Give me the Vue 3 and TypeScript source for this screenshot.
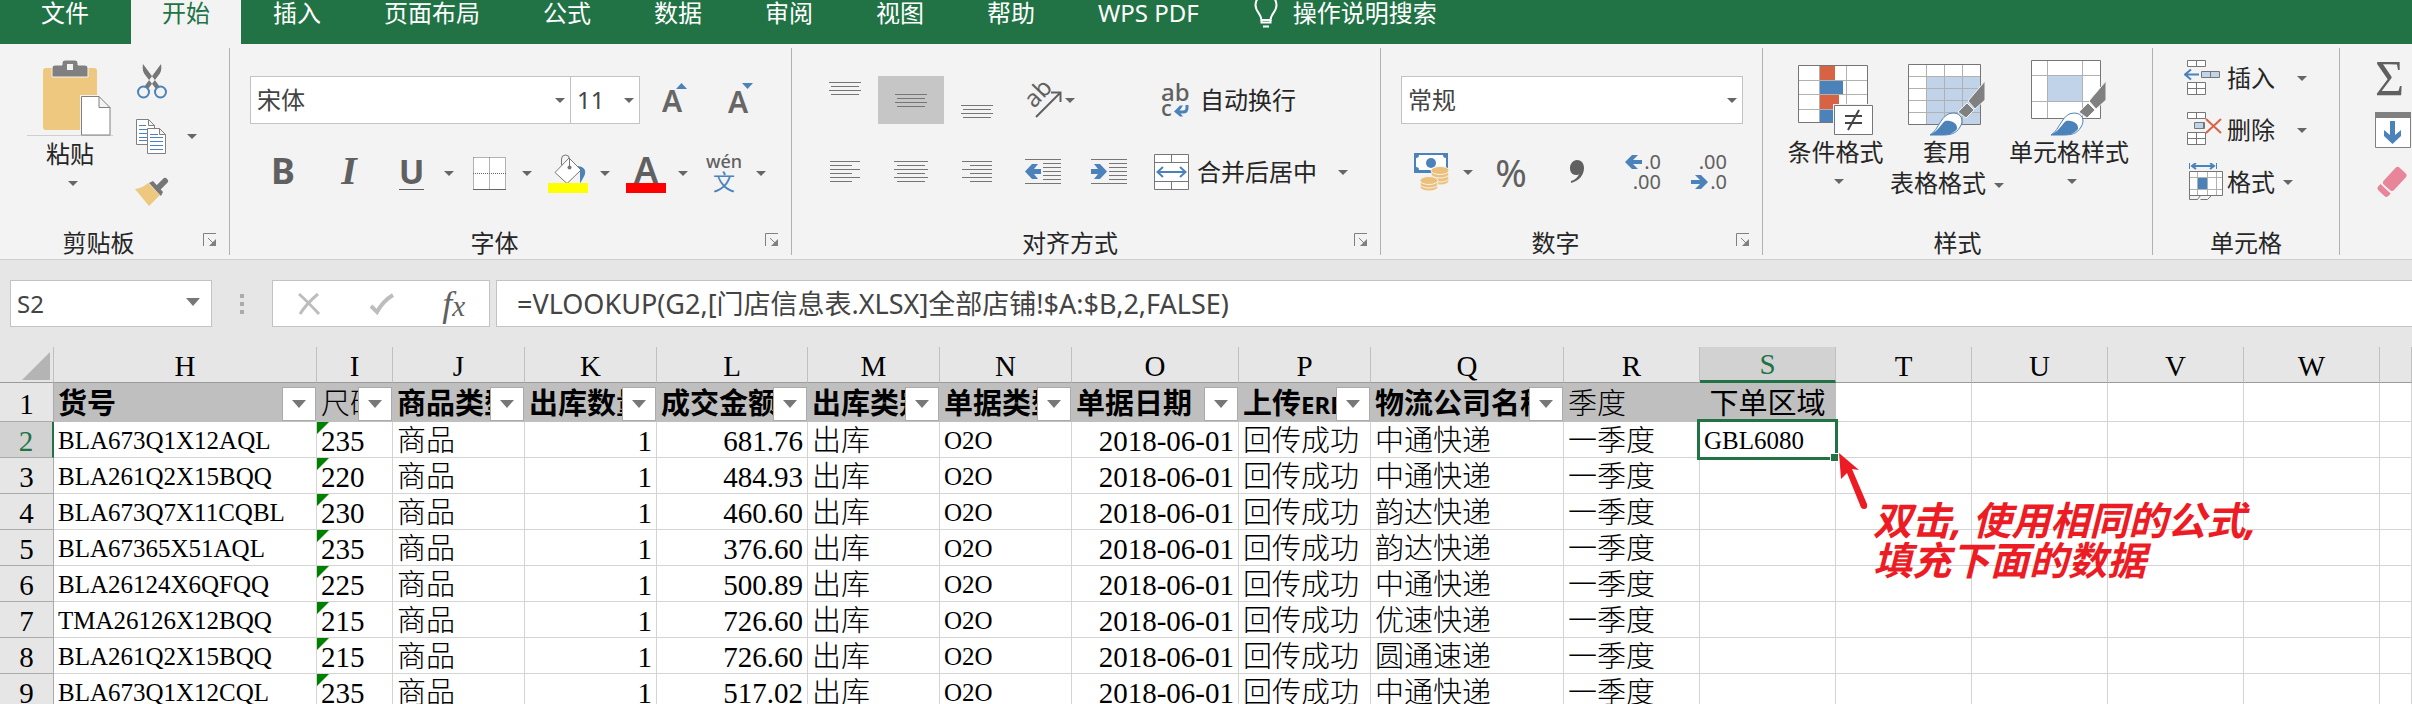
<script setup lang="ts">
import { ref } from 'vue'

interface Column {
  id: string
  width: number | null
  title?: string
  latin?: string
  kind?: 'bold' | 'plain' | 'centred'
  filter?: boolean
}

interface Row {
  n: number
  code: string
  size: string
  amount: string
  carrier: string
}

const tabs = ['开始', '插入', '页面布局', '公式', '数据', '审阅', '视图', '帮助', 'WPS PDF']
const activeTab = ref('开始')

const fontName = ref('宋体')
const fontSize = ref('11')
const numberFormat = ref('常规')
const nameBox = ref('S2')
const formula = ref('=VLOOKUP(G2,[门店信息表.XLSX]全部店铺!$A:$B,2,FALSE)')

const columns: Column[] = [
  { id: 'H', width: 263, title: '货号', kind: 'bold', filter: true },
  { id: 'I', width: 76, title: '尺码', kind: 'plain', filter: true },
  { id: 'J', width: 132, title: '商品类型', kind: 'bold', filter: true },
  { id: 'K', width: 132, title: '出库数量', kind: 'bold', filter: true },
  { id: 'L', width: 151, title: '成交金额', kind: 'bold', filter: true },
  { id: 'M', width: 132, title: '出库类别', kind: 'bold', filter: true },
  { id: 'N', width: 132, title: '单据类型', kind: 'bold', filter: true },
  { id: 'O', width: 167, title: '单据日期', kind: 'bold', filter: true },
  { id: 'P', width: 132, title: '上传', latin: 'ERP', kind: 'bold', filter: true },
  { id: 'Q', width: 193, title: '物流公司名称', kind: 'bold', filter: true },
  { id: 'R', width: 136, title: '季度', kind: 'plain' },
  { id: 'S', width: 136, title: '下单区域', kind: 'centred' },
  { id: 'T', width: 136 },
  { id: 'U', width: 136 },
  { id: 'V', width: 136 },
  { id: 'W', width: 136 },
  { id: '', width: null },
]

const rows: Row[] = [
  { n: 2, code: 'BLA673Q1X12AQL', size: '235', amount: '681.76', carrier: '中通快递' },
  { n: 3, code: 'BLA261Q2X15BQQ', size: '220', amount: '484.93', carrier: '中通快递' },
  { n: 4, code: 'BLA673Q7X11CQBL', size: '230', amount: '460.60', carrier: '韵达快递' },
  { n: 5, code: 'BLA67365X51AQL', size: '235', amount: '376.60', carrier: '韵达快递' },
  { n: 6, code: 'BLA26124X6QFQQ', size: '225', amount: '500.89', carrier: '中通快递' },
  { n: 7, code: 'TMA26126X12BQQ', size: '215', amount: '726.60', carrier: '优速快递' },
  { n: 8, code: 'BLA261Q2X15BQQ', size: '215', amount: '726.60', carrier: '圆通速递' },
  { n: 9, code: 'BLA673Q1X12CQL', size: '235', amount: '517.02', carrier: '中通快递' },
]
</script>

<template>
  <div class="app">
    <nav class="tabs">
      <button class="tab file" type="button">文件</button>
      <button
        v-for="t in tabs"
        :key="t"
        type="button"
        class="tab"
        :class="{ active: t === activeTab }"
        @click="activeTab = t"
      >{{ t }}</button>
      <button class="tab tell" type="button">
        <svg width="24" height="34" viewBox="0 0 24 34">
          <path d="M7.500 24c0-6-6-8-6-15a10.500 10.500 0 0 1 21 0c0 7-6 9-6 15z" fill="none" stroke="#fff" stroke-width="2" />
          <path d="M7.500 24v2.500h9V24M9 30.500h6" fill="none" stroke="#fff" stroke-width="2" />
        </svg>
        操作说明搜索
      </button>
    </nav>

    <div class="ribbon">
      <section class="group clipboard">
        <div class="body">
          <button class="paste" type="button">
            <svg width="86" height="76" viewBox="0 0 86 76">
              <rect x="16" y="8" width="54" height="62" rx="3" fill="#edc87e" />
              <path d="M25 17V8q0-3 3-3h7V3q0-3 3-3h10q3 0 3 3v2h7q3 0 3 3v9z" fill="#808080" stroke="#f3f3f3" />
              <rect x="40" y="4" width="6" height="6" fill="#f3f3f3" />
              <path d="M0 75.500h86" stroke="#cfcfcf" />
              <path d="M53 75V35h20l12 12v28z" fill="#f3f3f3" />
              <path d="M54.500 36.500h17.500l11 11v27.500h-28.500zM72 36.500v11h11" fill="#fff" stroke="#808080" />
            </svg>
            <span class="line">粘贴</span>
            <i class="caret"></i>
          </button>
          <div class="side">
            <button type="button" aria-label="剪切">
              <svg width="34" height="38" viewBox="0 0 34 38">
                <path d="M8 1c-1 5 0 9 3 12l10 13 4-2zM26 1c1 5 0 9-3 12L13 26l-4-2z" fill="#767676" />
                <circle cx="8.500" cy="29" r="5.500" fill="none" stroke="#4b82ba" stroke-width="2" />
                <circle cx="25.500" cy="29" r="5.500" fill="none" stroke="#4b82ba" stroke-width="2" />
              </svg>
            </button>
            <button type="button" aria-label="复制" class="with-caret">
              <svg width="34" height="37" viewBox="0 0 34 37">
                <path d="M1.500 1.500h12l6 6v19h-18zM13.500 1.500v6h6" fill="#fff" stroke="#808080" />
                <path d="M4 7.500h7M4 11.500h12M4 15.500h12M4 19.500h12M4 22.500h12" stroke="#4b82ba" />
                <path d="M12.500 10.500h12l6 6v19h-18zM24.500 10.500v6h6" fill="#fff" stroke="#808080" />
                <path d="M15 16.500h8M15 19.500h13M15 23.500h13M15 27.500h13M15 31.500h13" stroke="#4b82ba" />
              </svg>
              <i class="caret"></i>
            </button>
            <button type="button" aria-label="格式刷">
              <svg width="34" height="30" viewBox="0 0 34 30">
                <path d="M0 12q8-1 13-6l12 12-11 11z" fill="#edc87e" />
                <path d="M14 6l4-2 10 11-2 4z" fill="#767676" />
                <path d="M23 11l7-7" stroke="#767676" stroke-width="6" stroke-linecap="round" />
              </svg>
            </button>
          </div>
        </div>
        <footer><span>剪贴板</span>
          <button type="button" class="launch" aria-label="剪贴板选项">
            <svg width="14" height="14" viewBox="0 0 14 14"><path d="M.5 13V.5H13M5 5l5 5" fill="none" stroke="#808080" /><path d="M13 6v7H6z" fill="#808080" /></svg>
          </button>
        </footer>
      </section>

      <section class="group font">
        <div class="body rows">
          <div class="row">
            <label class="combo name"><select v-model="fontName" aria-label="字体"><option>宋体</option><option>黑体</option></select><i class="caret"></i></label>
            <label class="combo size"><select v-model="fontSize" aria-label="字号"><option>11</option><option>12</option></select><i class="caret"></i></label>
            <button type="button" class="cell resize" aria-label="增大字号">
              <svg width="28" height="36" viewBox="0 0 28 36"><text x="0" y="30" class="ui w6" font-size="30" fill="#666">A</text><path d="M14 7h11l-5.500-6z" fill="#4b82ba" /></svg>
            </button>
            <button type="button" class="cell resize" aria-label="减小字号">
              <svg width="28" height="36" viewBox="0 0 28 36"><text x="0" y="31" class="ui w6" font-size="30" fill="#666">A</text><path d="M14 1h11l-5.500 6z" fill="#4b82ba" /></svg>
            </button>
          </div>
          <div class="row second">
            <button type="button" class="cell glyph">B</button>
            <button type="button" class="cell glyph it">I</button>
            <button type="button" class="split glyph first"><span class="un">U</span><i class="caret"></i></button>
            <button type="button" class="split" aria-label="边框">
              <svg width="33" height="33" viewBox="0 0 33 33">
                <path d="M0 0h33v33H0z" fill="#fff" />
                <path d="M.5.5h32M0 16.500h33M.5.5v32M32.500.5v32M16.500.5v32" stroke="#666" stroke-dasharray="1 1" fill="none" />
                <path d="M0 32.500h33" stroke="#666" />
              </svg>
              <i class="caret"></i>
            </button>
            <button type="button" class="split" aria-label="填充颜色">
              <svg width="40" height="40" viewBox="0 0 40 40">
                <path d="M28 13c7 0 10 3 9 8-1 3-3 6-5 9.500V19z" fill="#4b82ba" />
                <path d="M7 19.500L21 5l12 12-14 13.500z" fill="#fff" stroke="#767676" />
                <path d="M13.500 12V6q0-4 4-4 4 0 4 4v7" fill="none" stroke="#767676" />
                <circle cx="21.500" cy="14.500" r="2" fill="#767676" />
                <path d="M0 30h40v10H0z" fill="#ff0" />
              </svg>
              <i class="caret"></i>
            </button>
            <button type="button" class="split" aria-label="字体颜色">
              <svg width="40" height="40" viewBox="0 0 40 40">
                <text x="20" y="30" text-anchor="middle" class="ui w6" font-size="36" fill="#606060">A</text>
                <path d="M0 30h40v10H0z" fill="red" />
              </svg>
              <i class="caret"></i>
            </button>
            <button type="button" class="split" aria-label="拼音指南">
              <svg width="36" height="40" viewBox="0 0 36 40">
                <text x="18" y="15" text-anchor="middle" class="ui w5" font-size="18" fill="#606060">wén</text>
                <text x="18" y="37" text-anchor="middle" class="ui" font-size="22" fill="#4b82ba">文</text>
              </svg>
              <i class="caret"></i>
            </button>
          </div>
        </div>
        <footer><span>字体</span>
          <button type="button" class="launch" aria-label="字体选项">
            <svg width="14" height="14" viewBox="0 0 14 14"><path d="M.5 13V.5H13M5 5l5 5" fill="none" stroke="#808080" /><path d="M13 6v7H6z" fill="#808080" /></svg>
          </button>
        </footer>
      </section>

      <section class="group align">
        <div class="body rows">
          <div class="row">
            <button type="button" class="cell" aria-label="顶端对齐"><svg width="34" height="38" viewBox="0 0 34 38"><path d="M1 1.500h32M3 5.500h28M1 9.500h32M3 13.500h28" stroke="#767676" /></svg></button>
            <button type="button" class="cell on" aria-label="垂直居中"><svg width="34" height="38" viewBox="0 0 34 38"><path d="M1 13.500h32M3 17.500h28M1 21.500h32M3 25.500h28" stroke="#767676" /></svg></button>
            <button type="button" class="cell" aria-label="底端对齐"><svg width="34" height="38" viewBox="0 0 34 38"><path d="M1 24.500h32M3 28.500h28M1 32.500h32M3 36.500h28" stroke="#767676" /></svg></button>
            <button type="button" class="orient" aria-label="方向">
              <svg width="38" height="38" viewBox="0 0 38 38">
                <text x="0" y="0" transform="translate(9 28) rotate(-46)" class="ui" font-size="24" fill="#606060">ab</text>
                <path d="M11 36L35 12M26 11.500h9.500V21" fill="none" stroke="#606060" stroke-width="2" />
              </svg>
              <i class="caret"></i>
            </button>
            <button type="button" class="labelled wrap">
              <svg width="36" height="36" viewBox="0 0 36 36">
                <text x="7" y="19" class="ui w5" font-size="24" fill="#606060">ab</text>
                <text x="7" y="34" class="ui w5" font-size="22" fill="#606060">c</text>
                <path d="M33 23v3q0 4-4 4h-6" fill="none" stroke="#4b82ba" stroke-width="3" />
                <path d="M20 29.500l6-6h3l-4 6 4 5h-3z" fill="#4b82ba" />
              </svg>
              自动换行
            </button>
          </div>
          <div class="row">
            <button type="button" class="cell" aria-label="左对齐"><svg width="34" height="22" viewBox="0 0 34 22"><path d="M2 .5h30M2 4.500h22M2 8.500h30M2 12.500h22M2 16.500h30M2 20.500h22" stroke="#767676" /></svg></button>
            <button type="button" class="cell" aria-label="居中"><svg width="34" height="22" viewBox="0 0 34 22"><path d="M0 .5h34M3 4.500h28M0 8.500h34M3 12.500h28M0 16.500h34M3 20.500h28" stroke="#767676" /></svg></button>
            <button type="button" class="cell" aria-label="右对齐"><svg width="34" height="22" viewBox="0 0 34 22"><path d="M2 .5h30M10 4.500h22M2 8.500h30M10 12.500h22M2 16.500h30M10 20.500h22" stroke="#767676" /></svg></button>
            <button type="button" class="cell" aria-label="减少缩进量">
              <svg width="36" height="26" viewBox="0 0 36 26"><path d="M0 .5h36M18 4.500h18M18 8.500h18M18 12.500h18M18 16.500h18M18 20.500h18M0 24.500h36" stroke="#767676" /><path d="M0 12.500L7 5h6L9 10h7v5H9l4 5H7z" fill="#4b82ba" /></svg>
            </button>
            <button type="button" class="cell" aria-label="增加缩进量">
              <svg width="36" height="26" viewBox="0 0 36 26"><path d="M0 .5h36M18 4.500h18M18 8.500h18M18 12.500h18M18 16.500h18M18 20.500h18M0 24.500h36" stroke="#767676" /><path d="M16 12.500L9 5H3l4 5H0v5h7l-4 5h6z" fill="#4b82ba" /></svg>
            </button>
            <button type="button" class="labelled">
              <svg width="36" height="37" viewBox="0 0 36 37">
                <path d="M.5.5h34v35H.5zM.5 8.500h34M.5 27.500h34M17.500.5v8M17.500 27.500v8" fill="#fff" stroke="#767676" />
                <path d="M4 18h27" stroke="#4b82ba" stroke-width="2" />
                <path d="M9 13l-5.500 5L9 23M26 13l5.500 5-5.500 5" fill="none" stroke="#4b82ba" stroke-width="2" />
              </svg>
              合并后居中
              <i class="caret far"></i>
            </button>
          </div>
        </div>
        <footer><span>对齐方式</span>
          <button type="button" class="launch" aria-label="对齐选项">
            <svg width="14" height="14" viewBox="0 0 14 14"><path d="M.5 13V.5H13M5 5l5 5" fill="none" stroke="#808080" /><path d="M13 6v7H6z" fill="#808080" /></svg>
          </button>
        </footer>
      </section>

      <section class="group number">
        <div class="body rows">
          <div class="row">
            <label class="combo format"><select v-model="numberFormat" aria-label="数字格式"><option>常规</option><option>数值</option></select><i class="caret"></i></label>
          </div>
          <div class="row">
            <button type="button" class="money" aria-label="会计数字格式">
              <svg width="36" height="38" viewBox="0 0 36 38">
                <path d="M0 0h34v20H0z" fill="#4b82ba" />
                <path d="M5 2h24q0 3 3 3v9q-3 0-3 3H5q0-3-3-3V5q3 0 3-3z" fill="#fff" />
                <circle cx="17" cy="10" r="5" fill="#4b82ba" />
                <g fill="#edc07a" stroke="#f3f3f3">
                  <ellipse cx="26" cy="28" rx="9" ry="4" /><ellipse cx="26" cy="25" rx="9" ry="4" /><ellipse cx="26" cy="21" rx="9" ry="4" /><ellipse cx="26" cy="17.500" rx="9" ry="4" />
                  <ellipse cx="15" cy="34" rx="9" ry="4" /><ellipse cx="15" cy="31" rx="9" ry="4" /><ellipse cx="15" cy="27.500" rx="9" ry="4" />
                </g>
              </svg>
              <i class="caret"></i>
            </button>
            <button type="button" class="cell percent">%</button>
            <button type="button" class="cell" aria-label="千位分隔样式">
              <svg width="16" height="24" viewBox="0 0 16 24"><path d="M8 0c5 0 7 4 7 8 0 7-5 13-13 15v-2c4-1 7-4 8-7-1 1-2 1-3 1-4 0-6-3-6-7s3-8 7-8z" fill="#606060" /></svg>
            </button>
            <button type="button" class="cell" aria-label="增加小数位数">
              <svg width="36" height="38" viewBox="0 0 36 38">
                <path d="M0 9l7-7h6l-5 5h9v4H8l5 5H7z" fill="#4b82ba" />
                <text x="36" y="16" text-anchor="end" class="ui" font-size="20" fill="#606060">.0</text>
                <text x="36" y="36" text-anchor="end" class="ui" font-size="20" fill="#606060">.00</text>
              </svg>
            </button>
            <button type="button" class="cell" aria-label="减少小数位数">
              <svg width="36" height="38" viewBox="0 0 36 38">
                <path d="M17 29l-7-7H4l5 5H0v4h9l-5 5h6z" fill="#4b82ba" />
                <text x="36" y="16" text-anchor="end" class="ui" font-size="20" fill="#606060">.00</text>
                <text x="36" y="36" text-anchor="end" class="ui" font-size="20" fill="#606060">.0</text>
              </svg>
            </button>
          </div>
        </div>
        <footer><span>数字</span>
          <button type="button" class="launch" aria-label="数字选项">
            <svg width="14" height="14" viewBox="0 0 14 14"><path d="M.5 13V.5H13M5 5l5 5" fill="none" stroke="#808080" /><path d="M13 6v7H6z" fill="#808080" /></svg>
          </button>
        </footer>
      </section>

      <section class="group styles">
        <div class="body">
          <button type="button" class="big">
            <svg width="76" height="76" viewBox="0 0 76 76">
              <g transform="translate(0 5)">
                <path d="M.5.5h69v57H.5z" fill="#fff" />
                <path d="M21.500.5v57M48.500.5v57M.5 15.500h69M.5 29.500h69M.5 44.500h69" stroke="#b1b1b1" />
                <path d="M22 1h15v14H22zM22 30h19v14H22z" fill="#d86344" />
                <path d="M22 16h23v13H22zM22 45h14v12H22z" fill="#4b82ba" />
                <path d="M.5.5h69v57H.5z" fill="none" stroke="#767676" />
                <path d="M35 39h41v32H35z" fill="#f3f3f3" />
                <path d="M36.500 40.500h38v29h-38z" fill="#fff" stroke="#767676" />
                <path d="M47 51h17M47 58h17M50 65l11-20" stroke="#444" stroke-width="2" />
              </g>
            </svg>
            <span class="line">条件格式</span>
            <i class="caret"></i>
          </button>
          <button type="button" class="big wide">
            <svg width="78" height="76" viewBox="0 0 78 76">
              <defs>
                <g id="brush">
                  <path d="M50 48l9-9 7 7-8 8z M60 37L77 17v19L67 45z" fill="#808080" stroke="#f3f3f3" />
                  <path d="M22 71c9-5 11-22 23-22 9 0 11 8 7 14-4 7-10 8-18 8z" fill="#fff" stroke="#4b82ba" />
                  <path d="M22 71c9-5 11-11 15-14 4-1 13 1 12 8-4 5-9 6-15 6z" fill="#4b82ba" />
                </g>
              </defs>
              <g transform="translate(0 4)">
                <path d="M.5.5h72v60H.5z" fill="#fff" />
                <path d="M18 12h54v48H18z" fill="#c0d3e8" />
                <path d="M18.500.5v60M36.500.5v60M54.500.5v60M.5 12.500h72M.5 24.500h72M.5 36.500h72M.5 48.500h72" stroke="#b1b1b1" />
                <path d="M.5.5h72v60H.5z" fill="none" stroke="#767676" />
                <use href="#brush" />
              </g>
            </svg>
            <span class="line">套用</span>
            <span class="line">表格格式<i class="caret"></i></span>
          </button>
          <button type="button" class="big last">
            <svg width="76" height="76" viewBox="0 0 76 76">
              <path d="M.5.5h69v58H.5z" fill="#fff" />
              <path d="M17 16h34v25H17z" fill="#c0d3e8" />
              <path d="M16.500.5v58M51.500.5v58M.5 15.500h69M.5 41.500h69" stroke="#b1b1b1" />
              <path d="M.5.5h69v58H.5z" fill="none" stroke="#767676" />
              <use href="#brush" x="-2" y="4" />
            </svg>
            <span class="line">单元格样式</span>
            <i class="caret"></i>
          </button>
        </div>
        <footer><span>样式</span></footer>
      </section>

      <section class="group cells">
        <div class="body">
          <button type="button" class="op">
            <svg width="40" height="36" viewBox="0 0 40 36">
              <path d="M3.500.5h18v6h-18zM12.500.5v6M3.500 22.500h18v12h-18zM12.500 22.500v12M3.500 28.500h18" fill="#fff" stroke="#767676" />
              <path d="M17.500 11.500h18v6h-18zM26.500 11.500v6" fill="#c0d3e8" stroke="#767676" />
              <path d="M1 14.500h14M7 9.500l-6 5 6 5" fill="none" stroke="#4b82ba" stroke-width="2" />
            </svg>
            插入<i class="caret far"></i>
          </button>
          <button type="button" class="op">
            <svg width="40" height="36" viewBox="0 0 40 36">
              <path d="M3.500.5h18v6h-18zM12.500.5v6M3.500 20.500h18v12h-18zM12.500 20.500v12M3.500 26.500h18" fill="#fff" stroke="#767676" />
              <path d="M10.500 10.500h10v6h-10zM19.500 10.500v6" fill="#c0d3e8" stroke="#767676" />
              <path d="M22 7l15 14M37 7L22 21" stroke="#d86344" stroke-width="2" />
            </svg>
            删除<i class="caret far"></i>
          </button>
          <button type="button" class="op">
            <svg width="40" height="38" viewBox="0 0 40 38">
              <path d="M5.500 0v6M32.500 0v6" stroke="#4b82ba" />
              <path d="M8 3h22M12 0L8 3l4 3M26 0l4 3-4 3" fill="none" stroke="#4b82ba" stroke-width="2" />
              <path d="M5.500 8.500h33v24h-33z" fill="#fff" />
              <path d="M13.500 8.500v24M23.500 8.500v24M32.500 8.500v24M5.500 14.500h33M5.500 26.500h33" stroke="#b1b1b1" />
              <path d="M14 15h9v11h-9z" fill="#4b82ba" />
              <path d="M5.500 8.500h33v24h-33zM5.500 32.500v4h8l3-4M16.500 36.500h7l4-4" fill="none" stroke="#767676" />
            </svg>
            格式<i class="caret near"></i>
          </button>
        </div>
        <footer><span>单元格</span></footer>
      </section>

      <section class="group edit">
        <div class="body">
          <button type="button" class="sigma">Σ</button>
          <button type="button" aria-label="填充">
            <svg width="36" height="36" viewBox="0 0 36 36"><path d="M.5.5h35v35H.5z" fill="#fff" stroke="#808080" /><path d="M0 0h36v6H0z" fill="#808080" /><path d="M15 9h5v14l6-5v6l-8.500 8L9 24v-6l6 5z" fill="#4b82ba" /></svg>
          </button>
          <button type="button" aria-label="清除">
            <svg width="36" height="32" viewBox="0 0 36 32"><g transform="translate(16 18) rotate(-47)" fill="#e88598"><rect x="-6" y="-7" width="23" height="14" rx="3" /><path d="M-8-7v14h-3q-3 0-3-3v-8q0-3 3-3z" /></g></svg>
          </button>
        </div>
      </section>
    </div>

    <div class="formula-bar">
      <label class="name-box"><input v-model="nameBox" type="text" aria-label="名称框" /><i class="caret big-caret"></i></label>
      <span class="dots"><i></i><i></i><i></i></span>
      <div class="actions">
        <button type="button" aria-label="取消"><svg width="24" height="24" viewBox="0 0 24 24"><path d="M2 2q9 8 20 20M21 2Q10 11 3 22" fill="none" stroke="#bdbdbd" stroke-width="3" /></svg></button>
        <button type="button" aria-label="输入"><svg width="26" height="24" viewBox="0 0 26 24"><path d="M2 14l6 6Q14 9 24 3" fill="none" stroke="#bdbdbd" stroke-width="4" /></svg></button>
        <button type="button" class="fx"><span>f</span><small>x</small></button>
      </div>
      <input v-model="formula" class="formula" type="text" aria-label="编辑栏" />
    </div>

    <main class="sheet">
      <table>
        <colgroup>
          <col class="heads" />
          <col v-for="c in columns" :key="c.id" :style="c.width ? { width: c.width + 'px' } : {}" />
        </colgroup>
        <thead>
          <tr class="letters">
            <th class="corner"><svg width="28" height="28" viewBox="0 0 28 28"><path d="M28 0v28H0z" fill="#b4b4b4" /></svg></th>
            <th v-for="c in columns" :key="c.id" :class="{ sel: c.id === 'S' }">{{ c.id }}</th>
          </tr>
        </thead>
        <tbody>
          <tr class="titles">
            <th class="num">1</th>
            <td v-for="c in columns" :key="c.id" :class="[c.kind, { grey: c.title }]">
              {{ c.title }}<small v-if="c.latin">{{ c.latin }}</small>
              <button v-if="c.filter" type="button" class="filter" :aria-label="'筛选 ' + c.title"><i class="caret big-caret"></i></button>
            </td>
          </tr>
          <tr v-for="r in rows" :key="r.n">
            <th class="num" :class="{ sel: r.n === 2 }">{{ r.n }}</th>
            <td class="code">{{ r.code }}</td>
            <td class="flag">{{ r.size }}</td>
            <td>商品</td>
            <td class="right">1</td>
            <td class="right">{{ r.amount }}</td>
            <td>出库</td>
            <td class="code">O2O</td>
            <td class="right">2018-06-01</td>
            <td>回传成功</td>
            <td>{{ r.carrier }}</td>
            <td>一季度</td>
            <td v-if="r.n === 2" class="code picked">
              GBL6080
              <span class="frame"></span><span class="handle"></span>
              <div class="note">
                <svg width="32" height="60" viewBox="0 0 32 60"><path d="M1 1l20 17-7-1 15 35q1 5-3 5-3 0-4-4L9 21l-6 6z" fill="#ed1c24" /></svg>
                <p>双击, 使用相同的公式,<br />填充下面的数据</p>
              </div>
            </td>
            <td v-else></td>
            <td></td><td></td><td></td><td></td><td></td>
          </tr>
        </tbody>
      </table>
    </main>
  </div>
</template>

<style>
body {
  margin: 0;
}
</style>

<style scoped>
.app {
  height: 100vh;
  overflow: hidden;
  background: #e6e6e6;
  color: #262626;
  font: 24px/30px "Noto Sans", "Noto Sans CJK SC", sans-serif;
}
button, input, select {
  font: inherit;
  color: inherit;
  box-sizing: border-box;
}
button {
  border: 0;
  background: none;
  padding: 0;
  margin: 0;
  display: flex;
  align-items: center;
  white-space: nowrap;
}
svg {
  display: block;
  flex: none;
}
.ui {
  font-family: "Noto Sans", "Noto Sans CJK SC", sans-serif;
}
.w5 { font-weight: 500; }
.w6 { font-weight: 600; }
.caret {
  flex: none;
  width: 0;
  height: 0;
  border: solid transparent;
  border-width: 5px 5px 0;
  border-top-color: #666;
}
.big-caret {
  border-width: 8px 7px 0;
  border-top-color: #777;
}

.tabs {
  display: flex;
  gap: 1px;
  height: 44px;
  background: #217346;
}
.tab {
  padding: 0 31px 18px;
  color: #fff;
}
.tab.file { padding: 0 41px 18px; }
.tab.active {
  background: #f3f3f3;
  color: #217346;
}
.tab.tell {
  padding-left: 23px;
  gap: 15px;
}

.ribbon {
  display: flex;
  padding: 4px 0;
  height: 207px;
  background: #f3f3f3;
  border-bottom: 1px solid #d0d0d0;
}
.group {
  flex: none;
  box-sizing: border-box;
  border-right: 1px solid #b1b1b1;
}
.body {
  display: flex;
  height: 180px;
}
.rows {
  box-sizing: border-box;
  flex-direction: column;
  padding: 16px 0 0 20px;
}
.row {
  display: flex;
  align-items: center;
  height: 72px;
}
footer {
  display: flex;
  height: 27px;
  line-height: 30px;
}
footer span {
  flex: 1;
  text-align: center;
}
.launch {
  width: 32px;
  padding: 0 6px 4px;
}
.clipboard { width: 230px; }
.font { width: 562px; }
.align { width: 589px; }
.number { width: 382px; }
.styles { width: 390px; }
.cells { width: 187px; }
.edit {
  flex: 1 0 72px;
  border-right: 0;
}

.paste {
  flex-direction: column;
  width: 86px;
  margin-left: 27px;
  padding-top: 12px;
}
.paste .line { line-height: 36px; }
.paste .caret { margin: 9px 0 0 6px; }
.side {
  padding: 6px 0 0 22px;
}
.side button { height: 55px; }
.with-caret { gap: 18px; }

.combo {
  position: relative;
  display: block;
}
.combo select {
  display: block;
  width: 100%;
  height: 48px;
  padding: 0 6px;
  border: 1px solid #c3c3c3;
  border-radius: 0;
  background: #fff;
  color: #444;
  appearance: none;
}
.combo .caret {
  position: absolute;
  right: 6px;
  top: 22px;
  pointer-events: none;
}
.combo.name { width: 321px; }
.combo.size { width: 70px; margin-left: -1px; }
.combo.format { width: 342px; }
.cell {
  justify-content: center;
  width: 66px;
  height: 48px;
}
.resize { padding-left: 6px; }
.on { background: #c6c6c6; }
.glyph {
  color: #606060;
  font-weight: 700;
  font-size: 36px;
  line-height: 40px;
}
.second .cell { padding-bottom: 2px; }
.glyph.it {
  font-family: "Liberation Serif", serif;
  font-style: italic;
  font-size: 40px;
}
.un {
  height: 33px;
  line-height: 31px;
  border-bottom: 1px solid #606060;
  font-size: 34px;
}
.split {
  display: grid;
  grid-template-columns: 49px 25px;
  justify-items: center;
  align-items: center;
  width: 78px;
  padding-top: 2px;
}
.split.first { margin-left: 5px; }
.orient {
  width: 132px;
  padding-left: 15px;
  gap: 2px;
}
.labelled {
  padding-left: 12px;
  gap: 7px;
}
.wrap { gap: 10px; }
.labelled .far { margin-left: 14px; }
.money {
  width: 77px;
  padding-left: 13px;
  gap: 13px;
}
.percent {
  color: #606060;
  font-size: 38px;
}

.styles .body {
  padding-left: 21px;
  gap: 1px;
}
.big {
  flex-direction: column;
  width: 103px;
  padding-top: 12px;
}
.big.wide { width: 118px; }
.big.last { width: 124px; }
.line { line-height: 31px; }
.big .line .caret {
  display: inline-block;
  margin-left: 8px;
  vertical-align: middle;
}
.big > .caret { margin: 12px 0 0 6px; }

.cells .body {
  flex-direction: column;
  padding: 4px 0 0 31px;
  height: 176px;
}
.op {
  height: 52px;
  gap: 3px;
}
.op .far { margin-left: 19px; }
.op .near { margin-left: 5px; }
.edit .body {
  flex-direction: column;
  padding: 5px 0 0 35px;
}
.edit button { height: 51px; }
.edit .sigma {
  font: 50px/51px "Liberation Serif", serif;
  color: #606060;
}

.formula-bar {
  display: flex;
  align-items: center;
  height: 47px;
  padding: 20px 0;
  color: #444;
}
.name-box {
  position: relative;
  width: 202px;
  margin-left: 10px;
}
.name-box input {
  display: block;
  width: 100%;
  height: 47px;
  padding: 0 6px;
  border: 1px solid #c3c3c3;
  background: #fff;
}
.name-box .caret {
  position: absolute;
  right: 12px;
  top: 18px;
}
.dots {
  display: grid;
  gap: 4px;
  margin: 0 28px;
}
.dots i {
  width: 4px;
  height: 4px;
  background: #ababab;
}
.actions {
  display: flex;
  justify-content: space-around;
  box-sizing: border-box;
  width: 218px;
  height: 47px;
  border: 1px solid #c3c3c3;
  background: #fff;
}
.fx {
  font: italic 36px/40px "Liberation Serif", serif;
  color: #606060;
}
.fx small { font-size: 29px; padding-top: 4px; }
.formula {
  flex: 1;
  height: 47px;
  margin-left: 6px;
  padding: 0 20px 2px;
  border: 1px solid #c3c3c3;
  border-right: 0;
  background: #fff;
  font-size: 27px;
}

.sheet {
  overflow: hidden;
}
table {
  width: 100%;
  table-layout: fixed;
  border-collapse: separate;
  border-spacing: 0;
  color: #000;
  font: 29px/32px "Liberation Serif", "Noto Sans CJK SC", serif;
}
.heads { width: 54px; }
th, td {
  box-sizing: border-box;
  height: 36px;
  padding: 3px 0 0;
  border-right: 1px solid #d4d4d4;
  border-bottom: 1px solid #d4d4d4;
  font-weight: 400;
  white-space: nowrap;
}
td {
  position: relative;
  padding: 3px 4px 0;
  background: #fff;
  font-weight: 300;
}
th {
  background: #e6e6e6;
  border-color: #ababab;
}
.letters th {
  border-bottom: 1px solid #9b9b9b;
  border-right-color: #c0c0c0;
}
.letters .sel {
  padding-top: 1px;
  background: #d2d2d2;
  color: #217346;
  border-bottom: 3px solid #217346;
}
.corner svg { margin-left: 22px; }
.num.sel {
  background: #d2d2d2;
  color: #217346;
  border-right: 2px solid #217346;
}
.titles td, .titles th { height: 39px; }
.titles .grey {
  background: #bfbfbf;
  border-color: #bfbfbf;
  overflow: hidden;
}
.titles .bold { font-weight: 700; }
.bold small { font: 700 24px/20px "Noto Sans", sans-serif; }
.titles .centred { text-align: center; font-weight: 400; }
.filter {
  position: absolute;
  right: 0;
  bottom: 0;
  justify-content: center;
  width: 34px;
  height: 34px;
  background: #fff;
  border: 1px solid #ababab;
}
.code { font-size: 25px; }
.right { text-align: right; }
.flag {
  background: linear-gradient(135deg, #008000 8px, transparent 9px) #fff;
}
.frame {
  position: absolute;
  inset: -3px;
  border: 3px solid #217346;
  pointer-events: none;
}
.handle {
  position: absolute;
  right: -4px;
  bottom: -5px;
  width: 7px;
  height: 7px;
  background: #217346;
  border: 1px solid #fff;
}
.picked { z-index: 1; }
.note {
  position: absolute;
  left: 138px;
  top: 30px;
  z-index: 2;
  color: #ed1c24;
}
.note p {
  margin: -12px 0 0;
  padding-left: 35px;
  font: italic 700 39px/40px "Noto Sans", "Noto Sans CJK SC", sans-serif;
}
</style>
